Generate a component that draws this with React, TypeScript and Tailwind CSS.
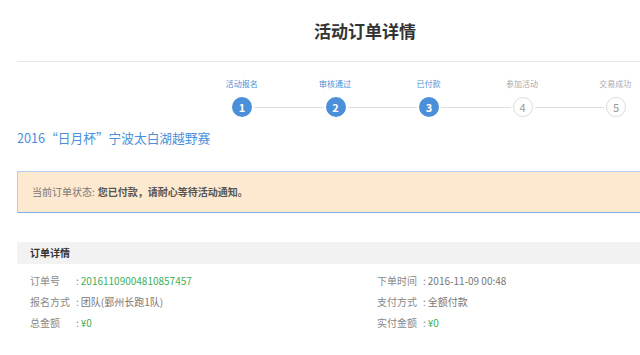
import React from "react";

const font = { fontFamily: '"Noto Sans CJK SC", "Noto Sans", sans-serif' };

const steps = [
  { label: "活动报名", done: true },
  { label: "审核通过", done: true },
  { label: "已付款", done: true },
  { label: "参加活动", done: false },
  { label: "交易成功", done: false },
];

function Row({ label, value, green }: { label: string; value: string; green?: boolean }) {
  return (
    <div className="flex items-center h-[21px] text-[10px] leading-none">
      <span className="w-[46px] text-[#888]">{label}</span>
      <span className="text-[#888] mr-[2px]">:</span>
      <span className={green ? "text-[#3eaf5c]" : "text-[#777]"}>{value}</span>
    </div>
  );
}

export default function App() {
  return (
    <div className="w-[640px] h-[355px] overflow-hidden bg-white" style={font}>
      <div className="ml-[17px] w-[696px]">
        <div className="h-[62px] flex items-center justify-center border-b border-[#e8e8e8]">
          <h1 className="text-[17px] font-bold text-[#333] leading-none pb-[1px]">活动订单详情</h1>
        </div>

        <div className="pl-[178px] pt-[16px]">
          <div className="grid grid-cols-5 w-[467px]">
            {steps.map((s) => (
              <div
                key={s.label}
                className={`text-center text-[8px] leading-[12px] ${s.done ? "text-[#4a8fd8]" : "text-[#aaa]"}`}
              >
                {s.label}
              </div>
            ))}
          </div>
          <div className="flex items-center w-[394px] ml-[37px] mt-[7px]">
            {steps.map((s, i) => (
              <React.Fragment key={s.label}>
                {i > 0 && <div className="flex-1 h-px bg-[#dedede] mx-[2px]" />}
                <div
                  className={`w-[20px] h-[20px] rounded-full flex items-center justify-center text-[11px] leading-none ${
                    s.done ? "bg-[#4a8fd8] text-white font-bold" : "border border-[#dcdcdc] text-[#999] bg-white"
                  }`}
                >
                  {i + 1}
                </div>
              </React.Fragment>
            ))}
          </div>
        </div>

        <div className="mt-[11px] text-[12.7px] leading-[20px] text-[#4a8fd8]">2016“日月杯”宁波太白湖越野赛</div>

        <div className="mt-[23px] h-[42px] bg-[#fde9cf] border border-[#b3cfee] border-b-[#7eb0e8] flex items-center pl-[14px] text-[10px] leading-none">
          <span className="text-[#777]">当前订单状态:</span>
          <span className="ml-[3px] font-bold text-[#555]">您已付款，请耐心等待活动通知。</span>
        </div>

        <div className="mt-[29px] h-[22px] bg-[#f2f2f2] flex items-center pl-[13px] text-[10px] font-bold text-[#333] leading-none">
          订单详情
        </div>

        <div className="flex pl-[13px] pt-[6px]">
          <div className="w-[347px]">
            <Row label="订单号" value="20161109004810857457" green />
            <Row label="报名方式" value="团队(鄞州长跑1队)" />
            <Row label="总金额" value="¥0" green />
          </div>
          <div>
            <Row label="下单时间" value="2016-11-09 00:48" />
            <Row label="支付方式" value="全额付款" />
            <Row label="实付金额" value="¥0" green />
          </div>
        </div>
      </div>
    </div>
  );
}
